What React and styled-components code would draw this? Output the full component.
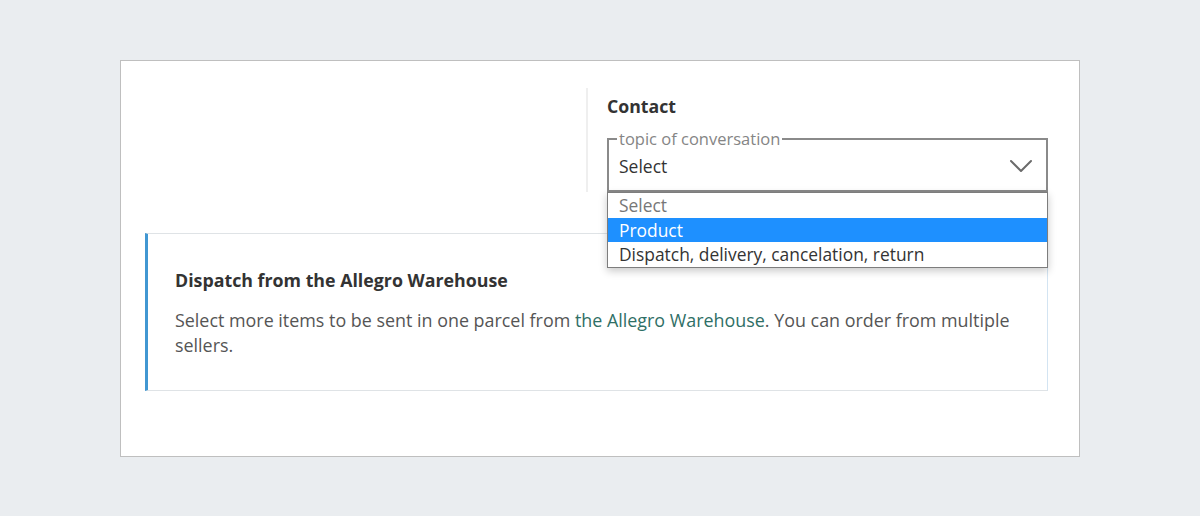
import React, { useState } from "react";
import styled, { createGlobalStyle } from "styled-components";

const GlobalStyle = createGlobalStyle`
  html, body {
    margin: 0;
    padding: 0;
    background: #eaedf0;
    font-family: "Open Sans", "Noto Sans", sans-serif;
  }
`;

const topics = [
  { label: "Select", placeholder: true },
  { label: "Product" },
  { label: "Dispatch, delivery, cancelation, return" },
];

const Chevron = () => (
  <svg width="24" height="14" viewBox="0 0 24 14" fill="none">
    <path
      d="M2 2 L12 12 L22 2"
      stroke="#6b6b6b"
      strokeWidth="2"
      strokeLinecap="round"
      strokeLinejoin="round"
    />
  </svg>
);

const App = () => {
  const [active, setActive] = useState(1);

  const options = topics.map((item, index) => (
    <Styled_Option
      key={index}
      $active={index === active}
      $placeholder={item.placeholder}
      onMouseEnter={() => setActive(index)}
    >
      {item.label}
    </Styled_Option>
  ));

  return (
    <>
      <GlobalStyle />
      <Styled_Card>
        <Styled_Top>
          <Styled_LeftColumn />
          <Styled_ContactColumn>
            <Styled_Heading>Contact</Styled_Heading>
            <Styled_SelectWrap>
              <Styled_Fieldset>
                <legend>topic of conversation</legend>
                <Styled_SelectRow>
                  <span>Select</span>
                  <Chevron />
                </Styled_SelectRow>
              </Styled_Fieldset>
              <Styled_OptionList>{options}</Styled_OptionList>
            </Styled_SelectWrap>
          </Styled_ContactColumn>
        </Styled_Top>

        <Styled_InfoBox>
          <h4>Dispatch from the Allegro Warehouse</h4>
          <p>
            Select more items to be sent in one parcel from{" "}
            <a href="#">the Allegro Warehouse</a>. You can order from multiple
            sellers.
          </p>
        </Styled_InfoBox>
      </Styled_Card>
    </>
  );
};

const Styled_Card = styled.div`
  width: 960px;
  box-sizing: border-box;
  margin: 60px auto 0;
  background: #fff;
  border: 1px solid #bfbfbf;
  padding: 27px 31px 65px 24px;
`;

const Styled_Top = styled.div`
  display: flex;
  flex-direction: row;
`;

const Styled_LeftColumn = styled.div`
  width: 441px;
  flex-shrink: 0;
`;

const Styled_ContactColumn = styled.div`
  flex: 1;
  border-left: 2px solid #efefef;
  padding: 6px 0 0 19px;
`;

const Styled_Heading = styled.h3`
  margin: 0;
  font-size: 17.7px;
  line-height: 24px;
  font-weight: 700;
  color: #333;
`;

const Styled_SelectWrap = styled.div`
  position: relative;
  margin-top: 11px;
`;

const Styled_Fieldset = styled.fieldset`
  margin: 0;
  border: 2px solid #8a8a8a;
  padding: 0 13px 0 8px;
  height: 63px;
  box-sizing: border-box;

  & legend {
    padding: 0 2px;
    font-size: 16.5px;
    line-height: 20px;
    color: #858585;
  }
`;

const Styled_SelectRow = styled.div`
  display: flex;
  align-items: center;
  justify-content: space-between;
  padding-left: 2px;
  height: 30px;
  margin-top: 2px;
  font-size: 17.5px;
  color: #333;
`;

const Styled_OptionList = styled.ul`
  position: absolute;
  left: 0;
  right: 0;
  top: 100%;
  margin: 0;
  padding: 0;
  list-style: none;
  background: #fff;
  border: 1px solid #7d7d7d;
  box-shadow: 0 3px 8px rgba(0, 0, 0, 0.22);
  z-index: 2;
`;

const Styled_Option = styled.li`
  height: 24.5px;
  line-height: 24.5px;
  padding-left: 11px;
  font-size: 17.4px;
  cursor: default;
  background: ${(p) => (p.$active ? "#1e90ff" : "transparent")};
  color: ${(p) => (p.$active ? "#fff" : p.$placeholder ? "#777" : "#333")};
`;

const Styled_InfoBox = styled.div`
  margin-top: 41px;
  border: 1px solid #dfe3e6;
  border-right-color: #d3e4f2;
  border-left: 3px solid #4197d2;
  padding: 34px 30px 32px 27px;

  & h4 {
    margin: 0;
    font-size: 17.8px;
    line-height: 24px;
    font-weight: 700;
    color: #333;
  }

  & p {
    margin: 16px 0 0;
    font-size: 17.9px;
    line-height: 25px;
    color: #555;
  }

  & a {
    color: #2f6f66;
    text-decoration: none;
  }
`;

export default App;
